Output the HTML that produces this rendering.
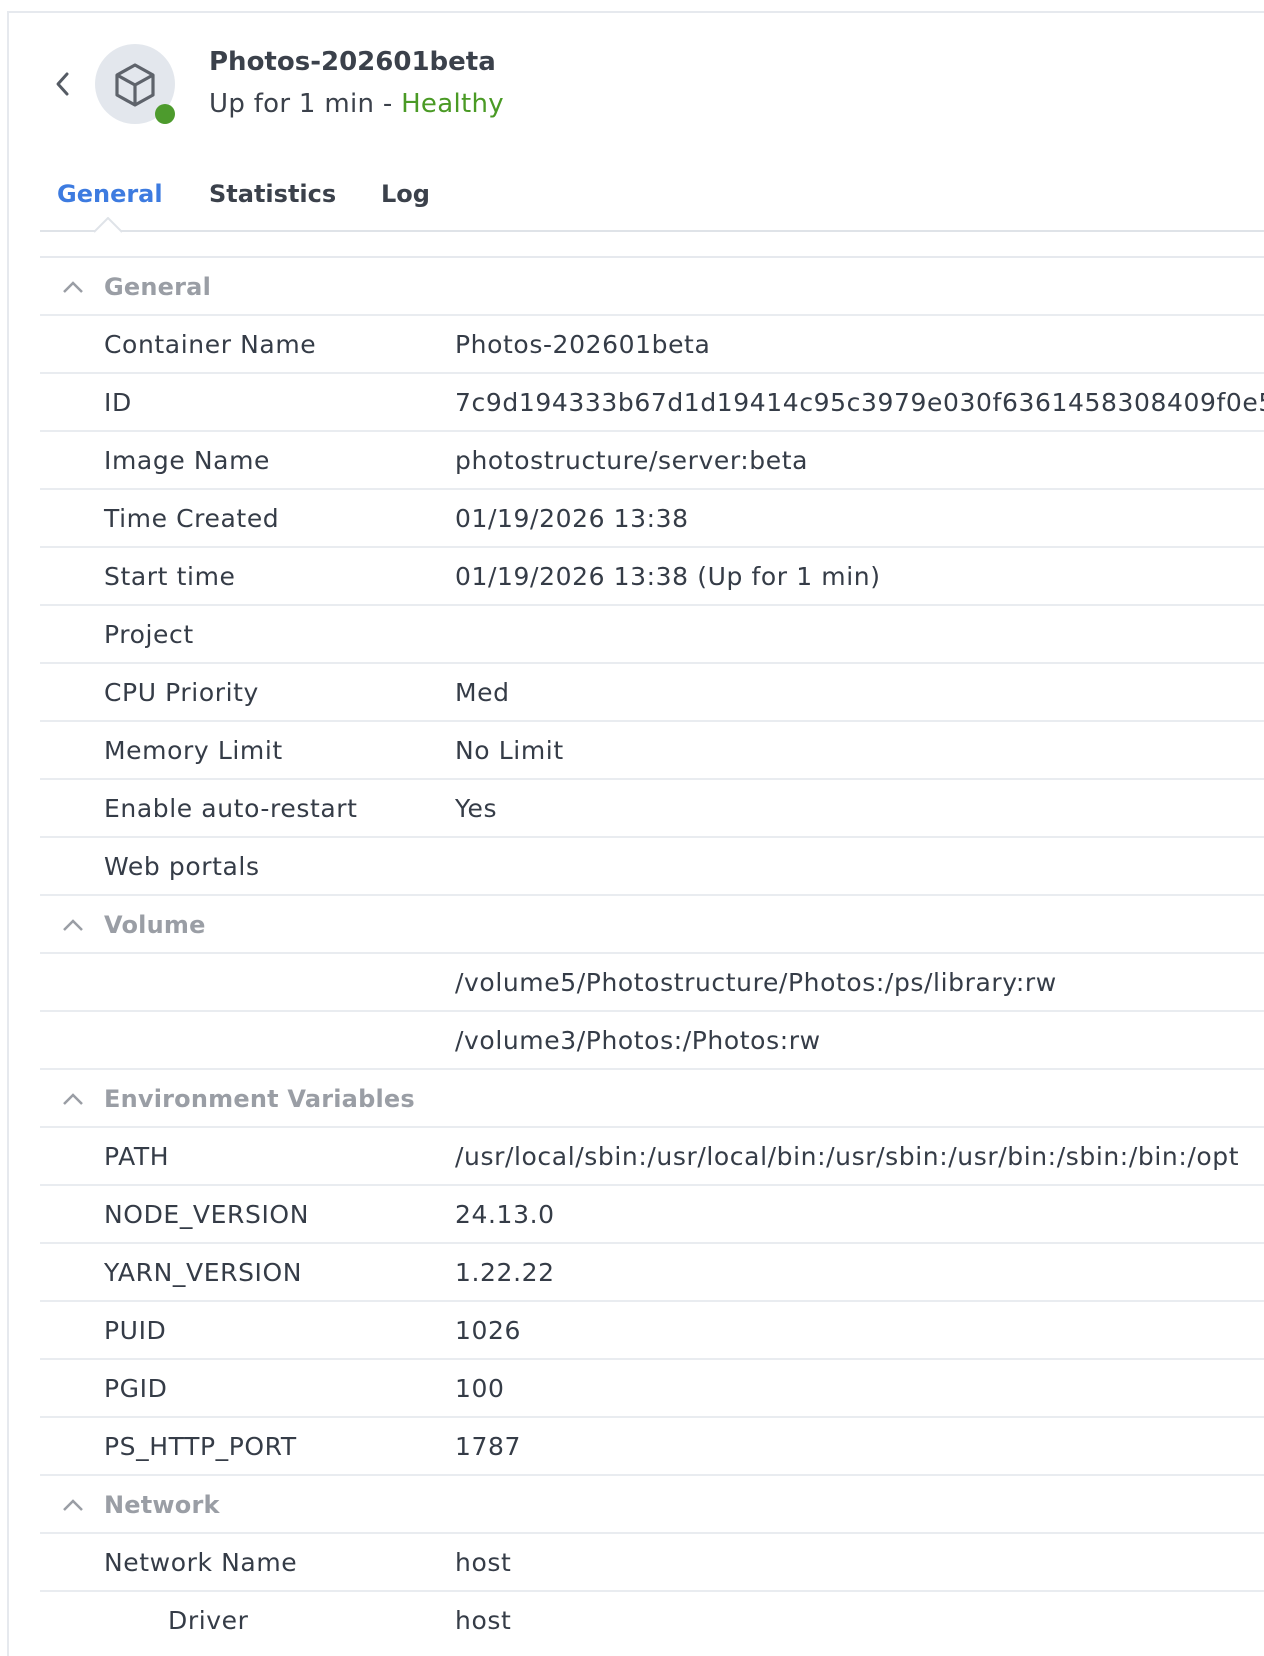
<!DOCTYPE html>
<html><head><meta charset="utf-8"><style>
*{box-sizing:border-box;margin:0;padding:0}
body{width:1264px;height:1656px;overflow:hidden;background:#fff;font-family:"DejaVu Sans","Liberation Sans",sans-serif;color:#353c47;position:relative}
.top{position:absolute;left:7px;right:0;top:11px;height:2px;background:#e6e9ee}
.left{position:absolute;left:7px;top:11px;bottom:0;width:2px;background:#e6e9ee}
.title{position:absolute;left:209px;top:47px;font-weight:bold;font-size:26px;color:#3b414b}
.sub{position:absolute;left:209px;top:89px;font-size:26px;letter-spacing:0.3px;color:#3b414b}
.sub span{color:#4a9a25}
.tab{position:absolute;top:180px;font-weight:bold;font-size:24px;color:#3b414b}
.tabline{position:absolute;left:40px;right:0;top:230px;height:2px;background:#dfe3e8}
.rows{position:absolute;left:40px;right:0;top:256px;border-top:2px solid #e6e9ee}
.row{height:58px;border-bottom:2px solid #e9ecf0;position:relative;font-size:25px;letter-spacing:0.6px;white-space:nowrap;overflow:hidden}
.row .k{position:absolute;left:64px;top:14px}
.row .v{position:absolute;left:415px;top:14px}
.row.h .k{color:#9a9ea5;font-weight:bold;font-size:24px;letter-spacing:0.2px;top:15px}
.chev{position:absolute;left:22px;top:22px}
</style></head><body>
<div class="top"></div><div class="left"></div>
<svg style="position:absolute;left:52px;top:70px" width="24" height="30" viewBox="0 0 24 30"><path d="M15 4 L6 14 L15 24" fill="none" stroke="#555b64" stroke-width="3" stroke-linecap="round" stroke-linejoin="round"/></svg>
<div style="position:absolute;left:95px;top:44px;width:80px;height:80px;border-radius:50%;background:#e3e7ed"></div>
<svg style="position:absolute;left:110px;top:60px" width="50" height="50" viewBox="0 0 50 50"><g fill="none" stroke="#5e636b" stroke-width="3.2" stroke-linejoin="round"><path d="M25 5 L43 15 L43 35 L25 45 L7 35 L7 15 Z"/><path d="M7 15 L25 25 L43 15 M25 25 L25 45"/></g></svg>
<div style="position:absolute;left:155px;top:104px;width:20px;height:20px;border-radius:50%;background:#4d9b2d"></div>
<div class="title">Photos-202601beta</div>
<div class="sub">Up for 1 min - <span>Healthy</span></div>
<div class="tab" style="left:57px;color:#3d7be0">General</div>
<div class="tab" style="left:209px">Statistics</div>
<div class="tab" style="left:381px">Log</div>
<div class="tabline"></div>
<svg style="position:absolute;left:94px;top:217px" width="28" height="16" viewBox="0 0 28 16"><path d="M0 15 L14 1 L28 15" fill="#fff" stroke="#dfe3e8" stroke-width="2"/></svg>
<div class="rows">
<div class="row h"><svg class="chev" width="22" height="14" viewBox="0 0 22 14"><path d="M2 12 L11 3 L20 12" fill="none" stroke="#9a9ea5" stroke-width="2.5"/></svg><span class="k">General</span></div>
<div class="row"><span class="k">Container Name</span><span class="v">Photos-202601beta</span></div>
<div class="row"><span class="k">ID</span><span class="v">7c9d194333b67d1d19414c95c3979e030f6361458308409f0e5a</span></div>
<div class="row"><span class="k">Image Name</span><span class="v">photostructure/server:beta</span></div>
<div class="row"><span class="k">Time Created</span><span class="v">01/19/2026 13:38</span></div>
<div class="row"><span class="k">Start time</span><span class="v">01/19/2026 13:38 (Up for 1 min)</span></div>
<div class="row"><span class="k">Project</span></div>
<div class="row"><span class="k">CPU Priority</span><span class="v">Med</span></div>
<div class="row"><span class="k">Memory Limit</span><span class="v">No Limit</span></div>
<div class="row"><span class="k">Enable auto-restart</span><span class="v">Yes</span></div>
<div class="row"><span class="k">Web portals</span></div>
<div class="row h"><svg class="chev" width="22" height="14" viewBox="0 0 22 14"><path d="M2 12 L11 3 L20 12" fill="none" stroke="#9a9ea5" stroke-width="2.5"/></svg><span class="k">Volume</span></div>
<div class="row"><span class="v">/volume5/Photostructure/Photos:/ps/library:rw</span></div>
<div class="row"><span class="v">/volume3/Photos:/Photos:rw</span></div>
<div class="row h"><svg class="chev" width="22" height="14" viewBox="0 0 22 14"><path d="M2 12 L11 3 L20 12" fill="none" stroke="#9a9ea5" stroke-width="2.5"/></svg><span class="k">Environment Variables</span></div>
<div class="row"><span class="k">PATH</span><span class="v">/usr/local/sbin:/usr/local/bin:/usr/sbin:/usr/bin:/sbin:/bin:/opt</span></div>
<div class="row"><span class="k">NODE_VERSION</span><span class="v">24.13.0</span></div>
<div class="row"><span class="k">YARN_VERSION</span><span class="v">1.22.22</span></div>
<div class="row"><span class="k">PUID</span><span class="v">1026</span></div>
<div class="row"><span class="k">PGID</span><span class="v">100</span></div>
<div class="row"><span class="k">PS_HTTP_PORT</span><span class="v">1787</span></div>
<div class="row h"><svg class="chev" width="22" height="14" viewBox="0 0 22 14"><path d="M2 12 L11 3 L20 12" fill="none" stroke="#9a9ea5" stroke-width="2.5"/></svg><span class="k">Network</span></div>
<div class="row"><span class="k">Network Name</span><span class="v">host</span></div>
<div class="row" style="border-bottom:none"><span class="k" style="left:128px">Driver</span><span class="v">host</span></div>
</div>
</body></html>
